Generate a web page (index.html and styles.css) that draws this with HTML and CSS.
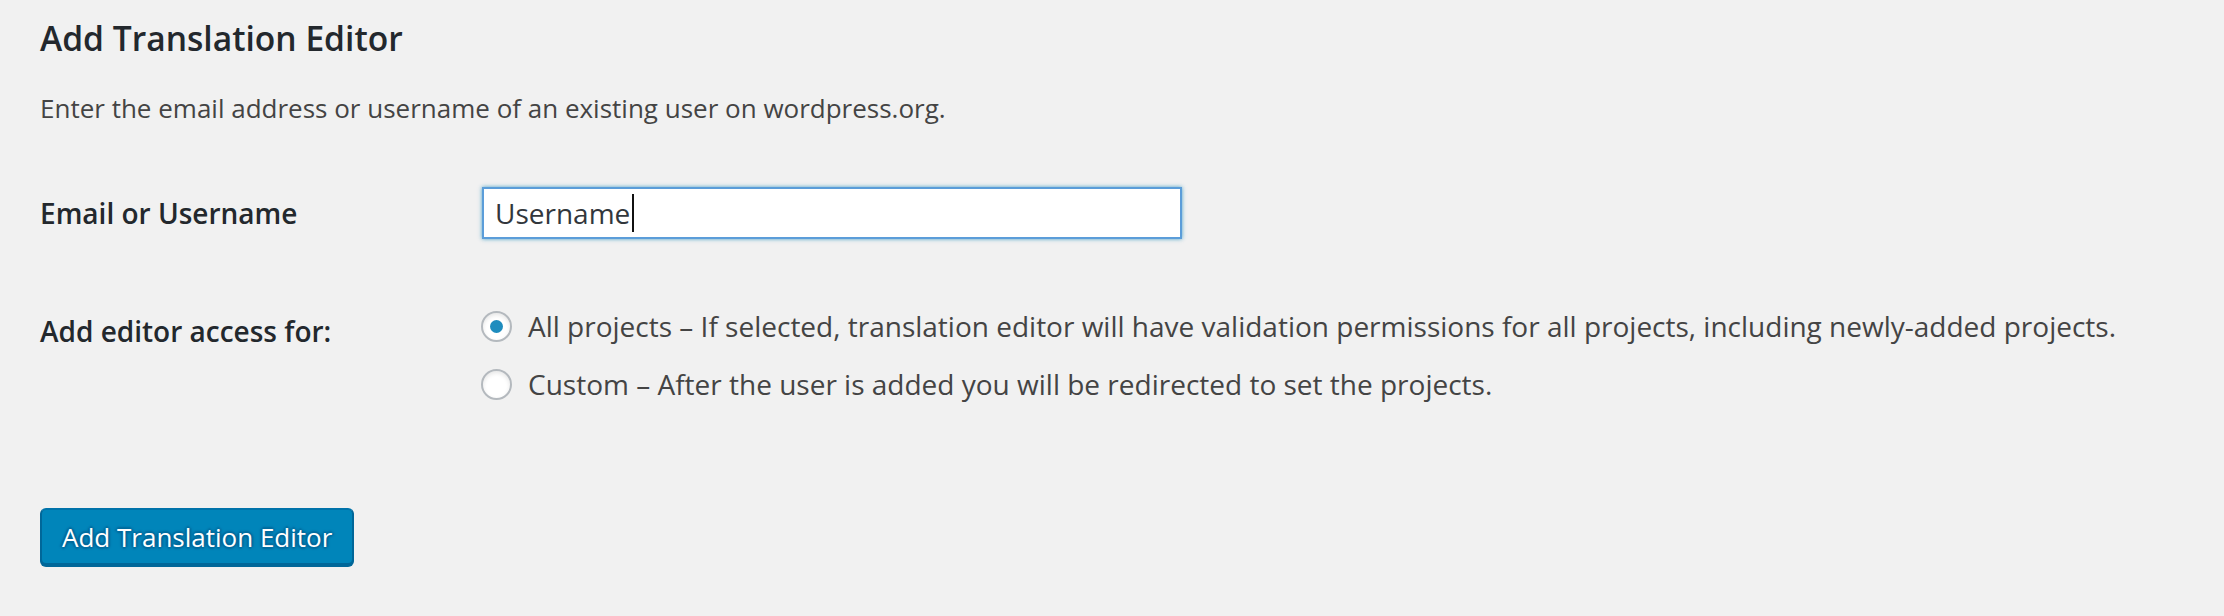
FILE: index.html
```html
<!DOCTYPE html>
<html lang="en">
<head>
<meta charset="utf-8">
<title>Add Translation Editor</title>
<link rel="stylesheet" href="styles.css">
</head>
<body>
<div class="wrap">
  <h2 class="title">Add Translation Editor</h2>
  <p class="desc">Enter the email address or username of an existing user on wordpress.org.</p>
  <form class="form">
    <div class="row row-user">
      <label class="row-label" for="user">Email or Username</label>
      <div class="field">
        <div class="text-input" id="user" role="textbox">Username<span class="caret"></span></div>
      </div>
    </div>
    <div class="row row-access">
      <div class="row-label row-label-offset">Add editor access for:</div>
      <div class="field radios">
        <label class="radio-item"><input type="radio" name="access" class="radio" checked><span>All projects – If selected, translation editor will have validation permissions for all projects, including newly-added projects.</span></label>
        <label class="radio-item"><input type="radio" name="access" class="radio"><span>Custom – After the user is added you will be redirected to set the projects.</span></label>
      </div>
    </div>
    <div class="actions">
      <button type="button" class="button-primary">Add Translation Editor</button>
    </div>
  </form>
</div>
</body>
</html>
```

FILE: styles.css
```css
html, body {
  margin: 0;
  padding: 0;
  background: #f1f1f1;
}

body {
  font-family: "Open Sans", "Noto Sans", sans-serif;
  color: #444;
}

.wrap {
  padding: 15px 40px;
}

.title {
  margin: 0;
  font-size: 33.6px;
  line-height: 46px;
  font-weight: 600;
  color: #23282d;
}

.desc {
  margin: 29px 0 0;
  font-size: 26px;
  line-height: 36px;
  color: #444;
}

.form {
  margin: 0;
}

.row {
  display: grid;
  grid-template-columns: 442px 1fr;
}

.row-user {
  margin-top: 61px;
  align-items: center;
}

.row-access {
  margin-top: 67px;
  align-items: start;
}

.row-label {
  font-size: 28px;
  line-height: 40px;
  font-weight: 600;
  color: #23282d;
}

.row-label-offset {
  padding-top: 5px;
}

.text-input {
  box-sizing: border-box;
  width: 700px;
  height: 52px;
  border: 2px solid #5b9dd9;
  box-shadow: 0 0 4px rgba(30, 140, 190, 0.8);
  background: #fff;
  padding: 0 11px;
  font-size: 28px;
  line-height: 48px;
  color: #32373c;
  display: flex;
  align-items: center;
}

.caret {
  display: inline-block;
  width: 2px;
  height: 38px;
  background: #111;
  margin-left: 2px;
}

.radios {
  display: flex;
  flex-direction: column;
  gap: 18px;
}

.radio-item {
  display: flex;
  align-items: center;
  gap: 16px;
  font-size: 28px;
  line-height: 40px;
  color: #444;
}

.radio {
  appearance: none;
  -webkit-appearance: none;
  box-sizing: border-box;
  width: 31px;
  height: 31px;
  margin: 0 0 0 -1px;
  border: 2px solid #b4b9be;
  border-radius: 50%;
  background: #fff;
  box-shadow: inset 0 2px 4px rgba(0, 0, 0, 0.1);
  display: flex;
  align-items: center;
  justify-content: center;
  flex: none;
}

.radio:checked::before {
  content: "";
  width: 13px;
  height: 13px;
  border-radius: 50%;
  background: #1e8cbe;
}

.actions {
  margin-top: 104px;
}

.button-primary {
  box-sizing: border-box;
  height: 57px;
  padding: 0 20px;
  border: 2px solid #0073aa;
  border-color: #0073aa #006799 #006799;
  border-radius: 6px;
  background: #0085ba;
  box-shadow: 0 2px 0 #006799;
  color: #fff;
  font-family: "Open Sans", "Noto Sans", sans-serif;
  font-size: 26px;
  line-height: 50px;
  text-shadow: 0 -2px 2px #006799, 2px 0 2px #006799, 0 2px 2px #006799, -2px 0 2px #006799;
  cursor: pointer;
}
```
